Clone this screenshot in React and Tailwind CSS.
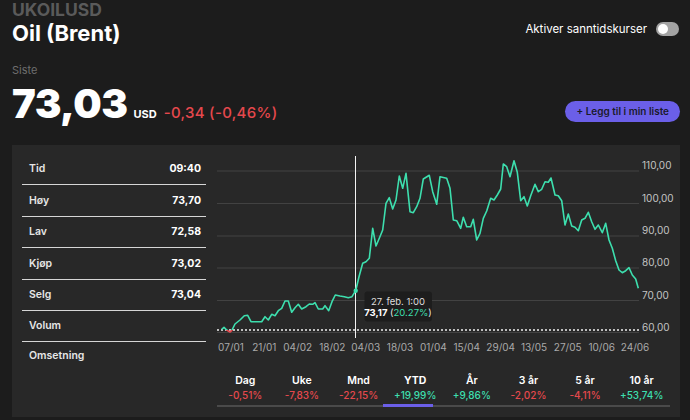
import React from "react";

const PTS = [
  [221.7, 329.3], [224, 327.3], [226.7, 330], [230, 332], [231.7, 330.7], [235, 324], [240, 320], [244.3, 315.7], [247.7, 315.3], [251, 321.7], [261.7, 321.7], [265, 316.7], [268.3, 320], [271.7, 314.3], [275, 315.7], [278.3, 310.7], [281.7, 308.3], [285, 301], [288.3, 301], [291.7, 312.3], [295, 307.7], [298.3, 304.3], [301.7, 309], [306, 306.7], [309.3, 304], [312.7, 304.3], [315, 302.7], [318.3, 309], [322.7, 309], [325, 305.7], [328.7, 310.7], [332, 301.7], [335.3, 295], [340, 296], [344.3, 296.7], [348.3, 297.7], [352, 296.7], [355.7, 290.7], [359, 276.7], [362.7, 263.3], [366, 261.7], [369.3, 258.3], [372.7, 228.3], [376, 246], [379.3, 238.3], [382.7, 230], [386, 203.3], [389.3, 197.7], [392.7, 209], [396, 200], [399.3, 176], [402.7, 188.3], [406, 173.3], [410, 211.7], [413.3, 212.7], [416.7, 206.7], [420, 198.3], [423.3, 179], [429.3, 175.3], [432.7, 191.7], [436.7, 204.3], [440, 176.7], [446.7, 178.3], [450, 188.3], [453.3, 220], [456.7, 220.7], [460.7, 228.3], [463.3, 217.3], [466.7, 226.7], [470.7, 226.7], [473.3, 219.3], [476.7, 240], [480, 233.3], [483.3, 218.3], [486.7, 211], [490.7, 198.3], [494, 200], [497.3, 195], [500.7, 189], [503.3, 164], [506.7, 166.7], [510, 176.7], [514, 160.7], [517.3, 172.3], [520.7, 200.7], [524, 196.7], [527.3, 206], [530.7, 195.7], [535, 184.3], [538.3, 191.7], [541.7, 189.3], [545, 181.7], [548.3, 182.3], [551, 178], [555, 195], [558.3, 195.7], [561.7, 200.7], [565, 225], [568.3, 214], [571.7, 226], [575, 227.3], [578.3, 230.7], [581.7, 220], [585, 218.3], [588.3, 212.3], [591.7, 221.7], [595, 229.3], [598.3, 225], [602.3, 232.7], [605.7, 223.3], [609, 240], [612.3, 248.3], [615.7, 260.7], [619, 270], [622.3, 272.7], [625.7, 270.7], [629, 267.7], [632.3, 275], [635.7, 279], [638.3, 288.3],
];

const GRID = [
  [171, "110,00"],
  [203.5, "100,00"],
  [236, "90,00"],
  [268, "80,00"],
  [300.5, "70,00"],
  [332.5, "60,00"],
];

const XL = [
  [231, "07/01"], [264.3, "21/01"], [297.7, "04/02"], [332.3, "18/02"], [365.7, "04/03"], [400, "18/03"], [433.3, "01/04"], [466.7, "15/04"], [500.7, "29/04"], [534, "13/05"], [567.7, "27/05"], [601.7, "10/06"], [635, "24/06"],
];

const ROWS = [
  ["Tid", "09:40", "h-[31px]"],
  ["Høy", "73,70", "h-[32px]"],
  ["Lav", "72,58", "h-[31px]"],
  ["Kjøp", "73,02", "h-[32px]"],
  ["Selg", "73,04", "h-[31px]"],
  ["Volum", "", "h-[31px]"],
  ["Omsetning", "", "h-[27px]"],
];

const TABS = [
  ["Dag", "-0,51%", false],
  ["Uke", "-7,83%", false],
  ["Mnd", "-22,15%", false],
  ["YTD", "+19,99%", true],
  ["År", "+9,86%", true],
  ["3 år", "-2,02%", false],
  ["5 år", "-4,11%", false],
  ["10 år", "+53,74%", true],
];

function Chart() {
  const pts = PTS.map((p) => p.join(",")).join(" ");
  return (
    <svg width="464" height="208" viewBox="216 150 464 208" className="block shrink-0">
      <defs>
        <clipPath id="above">
          <rect x="200" y="140" width="480" height="190" />
        </clipPath>
        <clipPath id="below">
          <rect x="200" y="330" width="480" height="40" />
        </clipPath>
      </defs>
      {GRID.map(([y, l]) => (
        <g key={l}>
          <line x1="217" x2="639" y1={y} y2={y} stroke="#424242" strokeWidth="1.2" />
          <text x="642" y={y - 2} fontSize="10" fill="#c4c4c4" fontFamily="Inter, sans-serif">
            {l}
          </text>
        </g>
      ))}
      <line x1="217" x2="639" y1="330" y2="330" stroke="#f0f0f0" strokeWidth="1.5" strokeDasharray="2 2" />
      {XL.map(([x, l]) => (
        <text key={l} x={x} y="351" fontSize="10" fill="#aaaaaa" textAnchor="middle" fontFamily="Inter, sans-serif">
          {l}
        </text>
      ))}
      <line x1="355.5" x2="355.5" y1="156" y2="338" stroke="#f2f2f2" strokeWidth="1" />
      <polyline points={pts} fill="none" stroke="#3ddfae" strokeWidth="1.6" strokeLinejoin="round" clipPath="url(#above)" />
      <polyline points={pts} fill="none" stroke="#e5484d" strokeWidth="1.6" strokeLinejoin="round" clipPath="url(#below)" />
      <circle cx="355.7" cy="290.7" r="2.2" fill="#3ddfae" />
      <rect x="364.5" y="291.5" width="67.5" height="30" rx="3" fill="#1d1d1d" />
      <text x="398" y="305" fontSize="9.5" fill="#dddddd" textAnchor="middle" fontFamily="Inter, sans-serif">
        27. feb. 1:00
      </text>
      <text x="398" y="315.5" fontSize="9.5" fill="#e6e6e6" textAnchor="middle" fontFamily="Inter, sans-serif">
        <tspan fontWeight="700" fill="#ffffff">73,17</tspan>
        <tspan> (</tspan>
        <tspan fill="#3ddfae">20.27%</tspan>
        <tspan>)</tspan>
      </text>
    </svg>
  );
}

export default function App() {
  return (
    <div
      className="w-[690px] h-[420px] overflow-hidden bg-[#1c1c1c] text-white"
      style={{ fontFamily: "Inter, 'Noto Sans', sans-serif" }}
    >
      <div className="pl-[12px] pr-[10px]">
        <div className="flex justify-between items-start">
          <div>
            <p className="text-[17.5px] leading-[20px] font-bold text-[#5a5a5a]">UKOILUSD</p>
            <p className="text-[22px] leading-[26px] font-bold text-white">Oil (Brent)</p>
          </div>
          <div className="flex items-center gap-[9px] mt-[20px] mr-[1px]">
            <span className="text-[11.5px] leading-[18px] text-white">Aktiver sanntidskurser</span>
            <span className="w-[23px] h-[14px] rounded-full bg-[#a3a3a3] flex items-center pl-[2px]">
              <span className="w-[10px] h-[10px] rounded-full bg-white" />
            </span>
          </div>
        </div>
        <p className="mt-[17px] text-[11px] leading-[14px] text-[#6e6e6e]">Siste</p>
        <div className="mt-[5px] flex justify-between items-end">
          <div className="flex items-baseline">
            <span className="text-[40px] leading-[44px] font-black tracking-[-0.5px]">73,03</span>
            <span className="ml-[6px] text-[11px] font-bold">USD</span>
            <span className="ml-[7px] text-[15px] font-medium text-[#e5484d] tracking-[0.3px]">-0,34 (-0,46%)</span>
          </div>
          <button className="mb-[4px] h-[21px] px-[11px] rounded-full bg-[#6b5fe8] text-[10px] font-semibold text-[#1a1a2a]">
            + Legg til i min liste
          </button>
        </div>
      </div>

      <div className="mt-[19px] ml-[12px] mr-[10px] h-[272px] bg-[#282828] flex items-start pl-[10px] pt-[5px]">
        <div className="w-[184px] shrink-0 pt-[4px]">
          {ROWS.map(([l, v, h], i) => (
            <div
              key={l}
              className={
                "flex justify-between items-center pl-[7px] pr-[5px] " +
                h +
                " " +
                (i < ROWS.length - 1 ? "border-b border-[#d6d6d6]" : "")
              }
            >
              <span className="text-[10.5px] font-semibold text-[#e6e6e6]">{l}</span>
              <span className="text-[10.5px] font-bold text-white">{v}</span>
            </div>
          ))}
        </div>
        <div className="ml-[10px] flex flex-col">
          <Chart />
          <div className="mt-[16px] ml-[1px] w-[453px]">
            <div className="grid grid-cols-8">
              {TABS.map(([l, v, up]) => (
                <div key={l} className="flex flex-col items-center">
                  <span className={"text-[10.5px] leading-[14px] text-white " + (l === "YTD" ? "font-bold" : "font-semibold")}>{l}</span>
                  <span className={"text-[10px] leading-[14px] font-medium " + (up ? "text-[#3ddfae]" : "text-[#e5484d]")}>{v}</span>
                </div>
              ))}
            </div>
            <div className="mt-[3px] h-[2px] bg-[#4a4a4a] relative">
              <div className="absolute left-[166px] w-[50px] -top-[1px] h-[3px] bg-[#6b5fe8]" />
            </div>
          </div>
        </div>
      </div>
    </div>
  );
}
